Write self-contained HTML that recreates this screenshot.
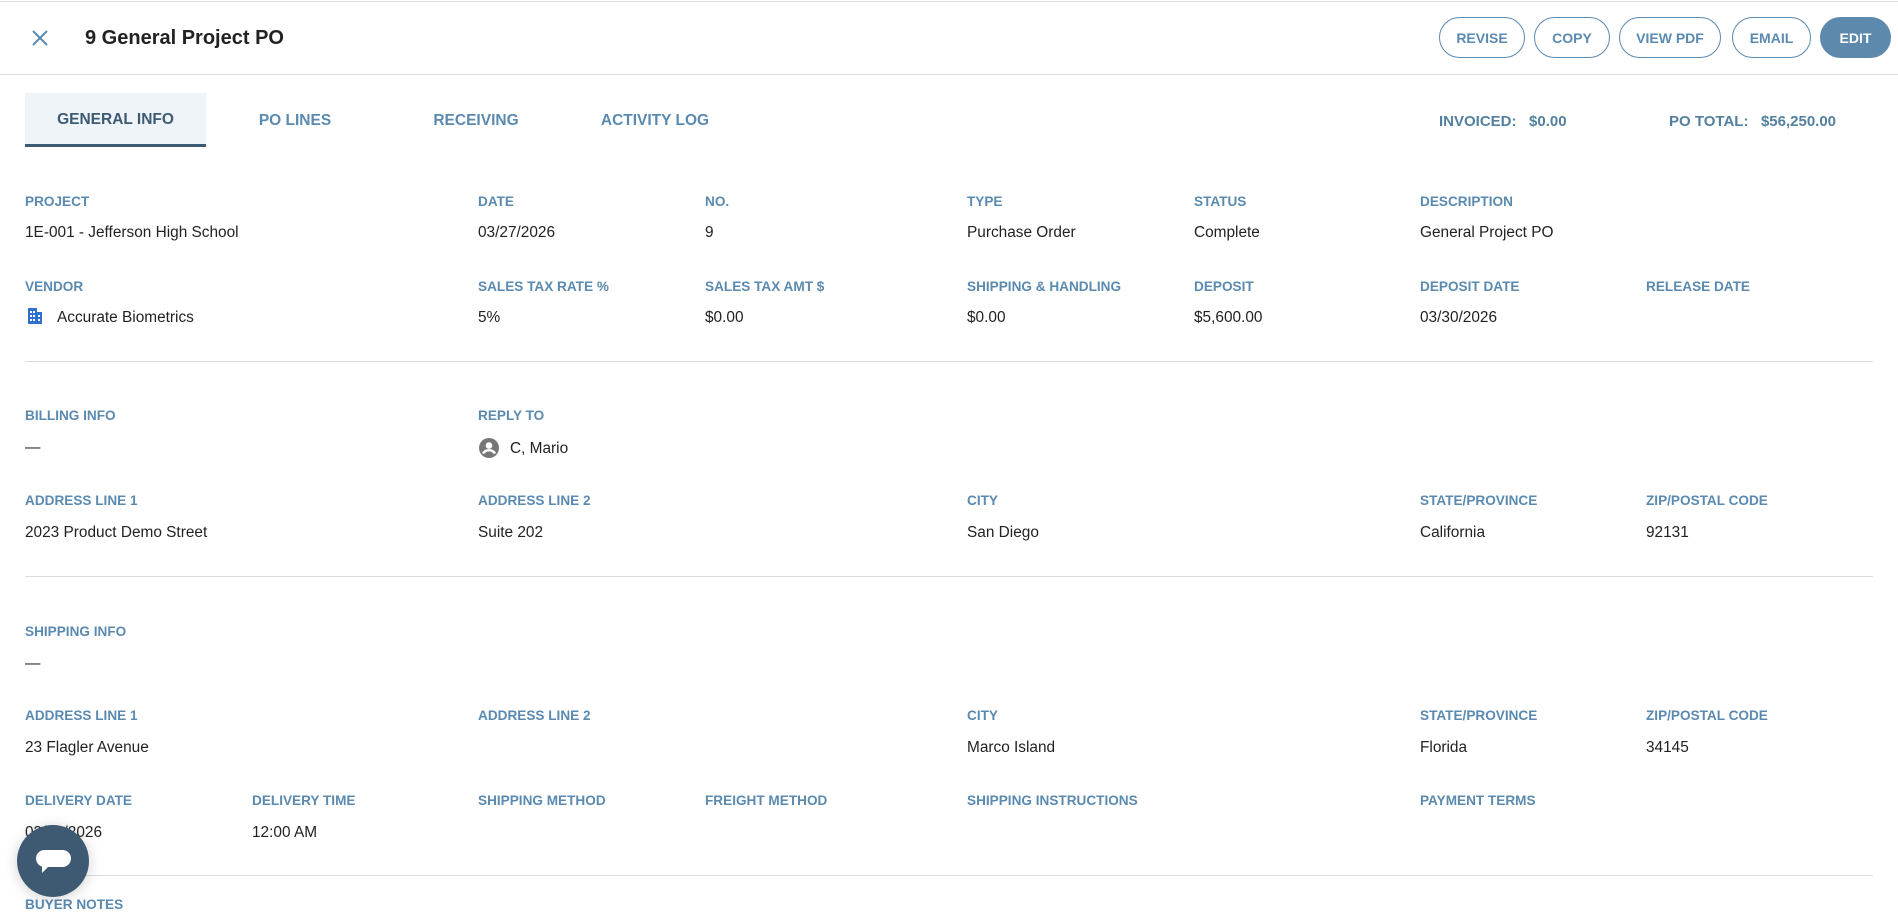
<!DOCTYPE html>
<html><head><meta charset="utf-8"><style>
*{margin:0;padding:0;box-sizing:border-box}
body{width:1898px;height:912px;overflow:hidden;background:#fff;font-family:"Liberation Sans",sans-serif;position:relative}
.a{position:absolute;white-space:nowrap}
.l{position:absolute;font-size:13.6px;font-weight:bold;color:#5b8ab0;line-height:16px;white-space:nowrap;margin-top:1px}
.v{position:absolute;font-size:15.4px;color:#222;line-height:18px;white-space:nowrap;margin-top:3px}
.hr{position:absolute;left:25px;width:1848px;height:1px;background:#dcdcdc}
.btn{position:absolute;top:17px;height:41px;border:1.5px solid #5b8ab0;border-radius:21px;color:#5b8ab0;font-weight:bold;font-size:14px;display:flex;align-items:center;justify-content:center}
.tab{position:absolute;top:93px;height:54px;font-size:15.5px;font-weight:bold;color:#5b8ab0;display:flex;align-items:center;justify-content:center;padding-top:2px}
</style></head><body>
<div class="a" style="left:0;top:1px;width:1898px;height:1px;background:#e2e2e2"></div>
<svg class="a" style="left:31px;top:29px" width="18" height="18" viewBox="0 0 18 18"><path d="M2 2L16 16M16 2L2 16" stroke="#5b8ab0" stroke-width="2"/></svg>
<div class="a" style="left:85px;top:26px;font-size:20px;font-weight:bold;color:#222;line-height:24px">9 General Project PO</div>
<div class="btn" style="left:1439px;width:86px">REVISE</div>
<div class="btn" style="left:1534px;width:76px">COPY</div>
<div class="btn" style="left:1619px;width:102px">VIEW PDF</div>
<div class="btn" style="left:1732px;width:79px">EMAIL</div>
<div class="btn" style="left:1820px;width:71px;background:#5d89ac;border-color:#5d89ac;color:#fff">EDIT</div>
<div class="a" style="left:0;top:74px;width:1898px;height:1px;background:#dcdcdc"></div>
<div class="tab" style="left:25px;width:181px;background:#eff4f8;color:#3d5a73;border-bottom:3px solid #3d5a73">GENERAL INFO</div>
<div class="tab" style="left:245px;width:100px">PO LINES</div>
<div class="tab" style="left:420px;width:112px">RECEIVING</div>
<div class="tab" style="left:590px;width:130px">ACTIVITY LOG</div>
<div class="a" style="left:1439px;top:113px;font-size:15px;font-weight:bold;color:#53809f">INVOICED:&nbsp;&nbsp;&nbsp;$0.00</div>
<div class="a" style="left:1669px;top:113px;font-size:15px;font-weight:bold;color:#53809f">PO TOTAL:&nbsp;&nbsp;&nbsp;$56,250.00</div>

<div class="l" style="left:25px;top:193px">PROJECT</div><div class="v" style="left:25px;top:221px">1E-001 - Jefferson High School</div>
<div class="l" style="left:478px;top:193px">DATE</div><div class="v" style="left:478px;top:221px">03/27/2026</div>
<div class="l" style="left:705px;top:193px">NO.</div><div class="v" style="left:705px;top:221px">9</div>
<div class="l" style="left:967px;top:193px">TYPE</div><div class="v" style="left:967px;top:221px">Purchase Order</div>
<div class="l" style="left:1194px;top:193px">STATUS</div><div class="v" style="left:1194px;top:221px">Complete</div>
<div class="l" style="left:1420px;top:193px">DESCRIPTION</div><div class="v" style="left:1420px;top:221px">General Project PO</div>

<div class="l" style="left:25px;top:278px">VENDOR</div>
<svg class="a" style="left:27px;top:307px" width="16" height="18" viewBox="0 0 16 18"><rect x="1" y="1" width="9" height="16" fill="#2f6fd0"/><rect x="10" y="5" width="5" height="12" fill="#2f6fd0"/><g fill="#fff"><rect x="3" y="4" width="2" height="2"/><rect x="6" y="4" width="2" height="2"/><rect x="3" y="8" width="2" height="2"/><rect x="6" y="8" width="2" height="2"/><rect x="3" y="12" width="2" height="2"/><rect x="6" y="12" width="2" height="2"/><rect x="11" y="8" width="2" height="2"/><rect x="11" y="12" width="2" height="2"/></g></svg>
<div class="v" style="left:57px;top:306px">Accurate Biometrics</div>
<div class="l" style="left:478px;top:278px">SALES TAX RATE %</div><div class="v" style="left:478px;top:306px">5%</div>
<div class="l" style="left:705px;top:278px">SALES TAX AMT $</div><div class="v" style="left:705px;top:306px">$0.00</div>
<div class="l" style="left:967px;top:278px">SHIPPING &amp; HANDLING</div><div class="v" style="left:967px;top:306px">$0.00</div>
<div class="l" style="left:1194px;top:278px">DEPOSIT</div><div class="v" style="left:1194px;top:306px">$5,600.00</div>
<div class="l" style="left:1420px;top:278px">DEPOSIT DATE</div><div class="v" style="left:1420px;top:306px">03/30/2026</div>
<div class="l" style="left:1646px;top:278px">RELEASE DATE</div>

<div class="hr" style="top:361px"></div>
<div class="l" style="left:25px;top:407px">BILLING INFO</div><div class="v" style="left:25px;top:436px">—</div>
<div class="l" style="left:478px;top:407px">REPLY TO</div>
<svg class="a" style="left:479px;top:438px" width="20" height="20" viewBox="0 0 20 20"><circle cx="10" cy="10" r="10" fill="#777"/><circle cx="10" cy="7.5" r="3.3" fill="#fff"/><path d="M4 15.5c1.5-2.5 3.5-3.3 6-3.3s4.5.8 6 3.3" stroke="#fff" stroke-width="2.5" fill="none"/></svg>
<div class="v" style="left:510px;top:437px">C, Mario</div>
<div class="l" style="left:25px;top:492px">ADDRESS LINE 1</div><div class="v" style="left:25px;top:521px">2023 Product Demo Street</div>
<div class="l" style="left:478px;top:492px">ADDRESS LINE 2</div><div class="v" style="left:478px;top:521px">Suite 202</div>
<div class="l" style="left:967px;top:492px">CITY</div><div class="v" style="left:967px;top:521px">San Diego</div>
<div class="l" style="left:1420px;top:492px">STATE/PROVINCE</div><div class="v" style="left:1420px;top:521px">California</div>
<div class="l" style="left:1646px;top:492px">ZIP/POSTAL CODE</div><div class="v" style="left:1646px;top:521px">92131</div>

<div class="hr" style="top:576px"></div>
<div class="l" style="left:25px;top:623px">SHIPPING INFO</div><div class="v" style="left:25px;top:652px">—</div>
<div class="l" style="left:25px;top:707px">ADDRESS LINE 1</div><div class="v" style="left:25px;top:736px">23 Flagler Avenue</div>
<div class="l" style="left:478px;top:707px">ADDRESS LINE 2</div>
<div class="l" style="left:967px;top:707px">CITY</div><div class="v" style="left:967px;top:736px">Marco Island</div>
<div class="l" style="left:1420px;top:707px">STATE/PROVINCE</div><div class="v" style="left:1420px;top:736px">Florida</div>
<div class="l" style="left:1646px;top:707px">ZIP/POSTAL CODE</div><div class="v" style="left:1646px;top:736px">34145</div>
<div class="l" style="left:25px;top:792px">DELIVERY DATE</div><div class="v" style="left:25px;top:821px">03/31/2026</div>
<div class="l" style="left:252px;top:792px">DELIVERY TIME</div><div class="v" style="left:252px;top:821px">12:00 AM</div>
<div class="l" style="left:478px;top:792px">SHIPPING METHOD</div>
<div class="l" style="left:705px;top:792px">FREIGHT METHOD</div>
<div class="l" style="left:967px;top:792px">SHIPPING INSTRUCTIONS</div>
<div class="l" style="left:1420px;top:792px">PAYMENT TERMS</div>
<div class="hr" style="top:875px"></div>
<div class="l" style="left:25px;top:896px">BUYER NOTES</div>

<div class="a" style="left:17px;top:825px;width:72px;height:72px;border-radius:50%;background:#3e5a73;box-shadow:0 2px 14px rgba(0,0,0,.18)"></div>
<div class="a" style="left:36px;top:850px;width:35px;height:17px;border-radius:9px;background:#fff"></div>
<svg class="a" style="left:42px;top:866px" width="8" height="8" viewBox="0 0 8 8"><path d="M0 0H7L0 7Z" fill="#fff"/></svg>
</body></html>
